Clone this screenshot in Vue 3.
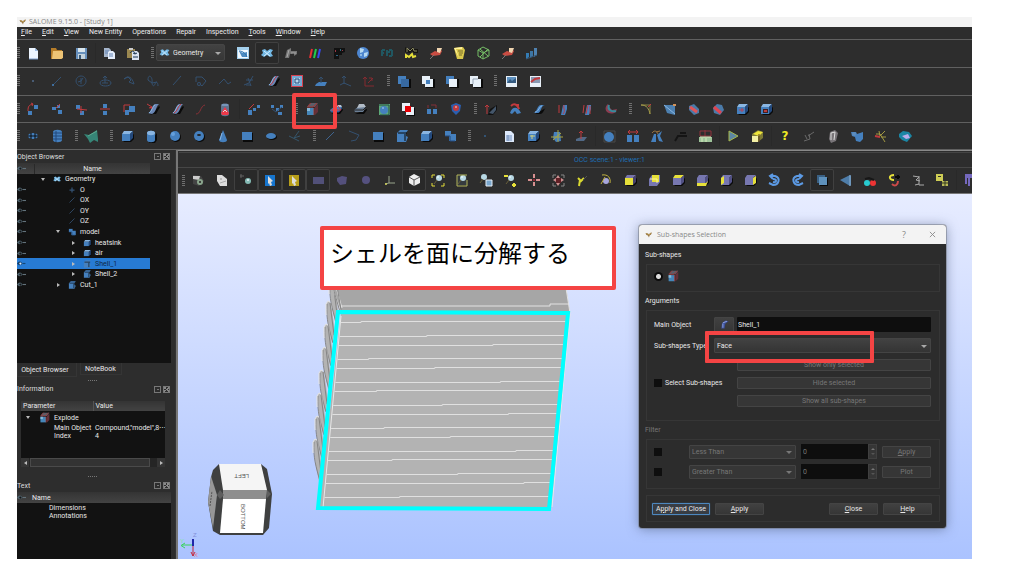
<script setup>
import { ref } from 'vue'

const b = '#4580be', d = '#23497c', l = '#8ab6e2', n = '#34506f', r = '#c23a3e', y = '#e6e03a', w = '#e8f0f8', v = '#7777b0', k = '#0a0a0a'
const P = (path, fill) => `<path d="${path}" fill="${fill}"/>`
const L = (path, stroke, width = 1) => `<path d="${path}" fill="none" stroke="${stroke}" stroke-width="${width}"/>`
const C = (x, cy, rad, fill) => `<circle cx="${x}" cy="${cy}" r="${rad}" fill="${fill}"/>`
const R = (x, ry, wd, h, fill) => `<rect x="${x}" y="${ry}" width="${wd}" height="${h}" fill="${fill}"/>`
const cube = (f = b, t = l, s = d) => P('M4 14h8l3-3V6z', k) + P('M3 6l2-3h9l-3 3z', t) + R(3, 6, 8, 7, f) + P('M11 6l3-3v7l-3 3z', s)
const sheet = P('M5 14l3-1h3l4-7-1-1z', k) + P('M3 12c3 0 4-8 7-9h4c-3 2-3 9-7 10z', '#6a86b4') + L('M4 12c3-1 3-7 6-8', l)
const slab = P('M3 13h9l3-4V8z', k) + P('M2 9l4-3h8l-3 5H3z', b) + P('M5 6l3-2h5l1 2z', '#b3c6da') + L('M3 11h8l3-4', d)
const glass = C(9, 6, 3, '#b8d8e4') + C(8, 5, 1, '#e5f6fb') + L('M7 8l-3 4', '#69603a')

const glyphs = {
  new: P('M4 3h6l3 3v8H4z', '#edf5ff') + P('M10 3v3h3z', '#9cbce4') + L('M4 14h9', '#7999c8'),
  open: P('M2 3h5l1 2h5v9H2z', '#b67d29') + P('M4 6h10v7l-2 1H3z', '#edc476'),
  save: R(3, 3, 11, 11, '#6790bd') + R(5, 3, 7, 4, '#d8e5ed') + R(5, 9, 7, 5, '#c3d2dc') + R(6, 10, 2, 4, '#375778'),
  copy: P('M3 3h5l2 2v7H3z', '#a5b5cc') + P('M7 6h5l2 2v6H7z', '#e5edfa') + L('M4 6h4M4 8h3M8 9h4M8 11h4', '#6585b5'),
  paste: R(2, 4, 8, 9, '#9b8850') + R(4, 3, 4, 2, '#ccc') + P('M7 6h5l2 2v7H7z', '#dce5f2') + L('M5 8c2-3 5-2 5 1l-2-1m2 1l2-1M8 12h5', '#19334e'),
  geometry: P('M3 5l3-1 2 2 3-2 3 1-2 3 2 3-3 1-3-2-3 2-3-2 2-2z', '#73b8e4') + L('M5 6l6 5m0-5l-6 5', '#d4eeff'),
  script: R(2, 2, 12, 12, '#a3cfec') + R(3, 5, 10, 8, '#f1f8ff') + P('M4 6l4 2 4-1v5H7z', '#4c8ac0') + L('M4 6c4 0 7 3 8 6', '#2b73b0'),
  mesh1: P('M2 13l2-8 4-2v3l6 0v3l-3 2V8L7 9l-1 4z', '#777') + L('M4 12l2-7M8 8h5', '#aaa'),
  bars: L('M3 13l2-9', '#e72e33', 2) + L('M7 13l2-9', '#23cd4b', 2) + L('M11 13l2-9', '#3548f5', 2),
  hex: P('M3 3h11v4l-3 1v2H8v4H3z', '#111') + R(4, 5, 1, 2, '#973744') + R(9, 4, 1, 2, '#316b7f') + R(5, 10, 2, 1, '#2e6684') + R(11, 5, 1, 1, '#973744'),
  globe: C(8, 8, 6, '#4d86d0') + P('M5 3l4 1-1 3-3 1zM9 8l4-1-1 4-3 1z', '#b5d9f1') + C(6, 10, 1, '#a5cded'),
  filter: L('M3 5v6m0-6h3M3 8h2M8 5v6m0-4h3m2-2v6m0-6h-3m0 6h3', '#205761', 2),
  yacs: P('M2 7V2l4 3 4-3 1 2h4v4h-4L9 6 7 8z', '#151510') + L('M4 7V3l3 3 3-3 1 3h3', '#8b8960') + L('M3 13v-3l3 2 3-3 1 3 3-1', y, 2),
  para: P('M3 9l5-3 3 1 1-4 3 3-2 4-7 1z', '#c94d43') + P('M10 3l5 0-2 5-3-1z', '#f0d5b0') + L('M3 14l4-4', '#777'),
  note: P('M3 3l9-1 2 3-2 9H6z', '#d9c84c') + P('M3 3l8-1v2H5l3 9z', '#fff19a') + L('M7 6h5M8 8h4M8 10h3', '#796d2d'),
  wire: L('M3 5l5-3 6 3v6l-6 3-5-3zm0 0l5 3 6-3M8 8v6M5 4l8 7M5 12l8-8', '#75bd66'),
  chart: P('M3 8l3 0v4l-3 2z', '#347cb4') + P('M7 6h3v5l-3 2z', '#3d76a5') + P('M11 3h3v7l-3 2z', '#4f82b0') + L('M3 14l11-4', '#365879'),
  point: C(8, 8, 1, '#536d8c'),
  line: L('M4 12l8-8', n) + C(4, 12, 1, b),
  circle: L('M8 3a5 5 0 1 0 .1 0M8 5v6M5 9l3-1 2-3', n),
  ellipse: L('M3 10c0 4 11 4 11 0s-11-4-11 0M8 10V3m-2 2l2-2 2 2M5 10h6', n),
  arc: L('M3 6l4-2 3 3-2 2 5 2M3 6c4-4 8-2 10 5', n),
  curve: L('M3 7c0-7 5-3 4 2 0 4 2 5 3 2s3-2 3 2M3 7l4 3 5-1', n),
  vector: L('M4 12l8-9', n),
  sketch: L('M3 9V4h6l4 4-4 5-3-3', n) + C(6, 11, 2, n) + C(6, 11, 1, '#2d2d2d'),
  poly: L('M2 11l5-5 4 5 3-2', n),
  iso: L('M3 12l5-2 4-7M5 7h7M5 12h5M7 5l3 8', n),
  rect: R(2, 2, 12, 12, '#d3404f') + R(3, 3, 10, 10, '#75aad4') + R(5, 5, 6, 6, '#b8d8eb') + L('M6 6h4v4H6z', d),
  plane: P('M3 11l3-2h8l-2 4H2z', b) + L('M8 10V4M6 6l2-2 2 2', n),
  axis: L('M7 3v8M3 12l4-2 7 3M5 5l2-2 2 2', n),
  axisred: L('M4 4v9h9M7 10l5-5M8 5h3v3M2 6l2-2 2 2', '#862a30'),
  sq1: R(2, 3, 8, 8, b) + R(6, 6, 9, 9, k) + R(5, 6, 8, 8, '#3769a1'),
  sq2: R(2, 3, 8, 8, w) + R(6, 6, 9, 9, k) + R(5, 6, 8, 8, w) + R(6, 7, 4, 4, b),
  sq3: R(2, 3, 8, 8, b) + R(6, 6, 9, 9, k) + R(5, 6, 8, 8, w),
  sq4: R(2, 3, 8, 8, w) + R(6, 6, 9, 9, k) + R(5, 6, 8, 8, w) + L('M5 11V6h5', '#95a4b5'),
  photo: R(3, 3, 11, 11, w) + R(4, 4, 9, 6, '#5e91c0') + P('M4 10l3-4 2 2 4-3v5z', '#345a80'),
  photored: R(3, 3, 11, 11, w) + R(4, 4, 9, 6, '#8899b2') + L('M4 9l4-3 5-1', r, 2),
  move: R(3, 10, 4, 4, b) + R(9, 4, 4, 4, b) + L('M3 10c0-5 1-6 5-7M6 2l2 1-1 2', r),
  scatter: R(3, 6, 4, 3, b) + R(8, 4, 3, 3, b) + R(9, 9, 4, 4, b) + L('M7 7l4-4', r),
  mirror: R(3, 4, 4, 4, b) + R(7, 10, 4, 4, b) + L('M4 8l10 1M8 5v7', r),
  scale: R(6, 3, 4, 4, b) + R(6, 10, 4, 4, b) + L('M3 8h10', r),
  offset: R(4, 9, 4, 5, b) + R(8, 5, 6, 6, b) + L('M3 11V4h6', r),
  proj: sheet + L('M2 3l5 3-1 2M7 6l-3 1', r),
  sweep: sheet + L('M5 12c4-2 3-6 7-9', r),
  redcurve: L('M3 13c5 0 4-8 9-9', '#8b3037'),
  can: P('M4 4c0-2 8-2 8 0v9c0 3-8 3-8 0z', '#63748f') + L('M5 4h6', l) + P('M4 12l4-6 4 6-1 2H5z', '#ee3949') + L('M6 11l2-2 2 2', '#ddd'),
  dotsup: R(3, 9, 4, 5, b) + R(8, 7, 3, 3, b) + R(12, 4, 3, 3, b) + L('M4 8l5-5', r),
  dots4: R(2, 4, 3, 3, b) + R(7, 7, 3, 3, b) + R(11, 4, 3, 3, b) + R(9, 11, 4, 3, b) + L('M3 8l4 3 6-5', n),
  explode: P('M3 6l3-4h8l-3 4z', '#5c5d68') + R(3, 7, 7, 7, '#4586b8') + R(3, 7, 3, 3, '#88b9d8') + P('M11 6l3-3v8l-3 3z', '#653039') + L('M3 6h6l4-4M10 7v7M4 5l3-3', '#a33433'),
  redslab: slab + L('M3 9h10l-4-5', r),
  slab: P('M3 13h9l3-4V8z', k) + P('M2 9l4-3h8l-3 5H3z', '#6b7f96') + P('M5 7l2-4h5l2 3z', '#b3bdc8') + L('M2 9h9l3-3', '#222'),
  sphereg: R(3, 3, 11, 11, '#5daa78') + L('M3 4h10v10H4', '#244d44') + C(8, 9, 4, b) + C(7, 7, 1, l),
  common: R(2, 2, 8, 8, w) + R(7, 7, 8, 8, k) + R(6, 6, 8, 8, w) + R(5, 5, 6, 6, '#e40006'),
  people: R(3, 8, 4, 5, b) + R(9, 8, 4, 5, b) + L('M4 7V4m8 3V4M7 4h5', '#863039'),
  shield: P('M3 4l5-2 5 2-1 6-4 4-4-4z', '#2b5faf') + C(8, 7, 3, r) + C(8, 6, 1, '#e5a2a2'),
  extrude: P('M7 8l7-4v5l-4 5H5z', '#111') + P('M6 12l7-7v4l-3 4z', '#44566a') + L('M4 13V4m-2 2l2-2 2 2', r),
  revolve: P('M3 12c2-7 8-7 11 0l-4 1-2-3-3 3z', b) + L('M4 5c4-4 7 0 8 3M9 4l3 0', r, 2),
  pipe: P('M4 13h5c4 0 4-6 6-6z', k) + P('M2 12c4 0 4-8 8-8h4c-4 0-4 8-7 8z', b) + L('M4 11c4 0 4-6 7-6', l),
  thin: P('M8 4h4v4l-2 6H6z', b) + L('M4 12V4m5 0c-1 5 2 5-1 9', r),
  pipes: P('M8 4h4v4l-2 6H6z', b) + L('M4 12l1-8m2 9l2-9m2 1v8', r),
  groove: P('M5 3c-6 5 0 13 8 8l1-3-5 1-2-2z', '#8d3d51') + L('M6 4c-2 5 3 7 7 6', '#358c9d', 2),
  fillet: L('M3 4h9v9', '#8c8540') + L('M3 4c6 0 8 4 9 9', '#a69d4a') + L('M10 6l3-3', r),
  chamfer: P('M2 4h11v10l-8-2z', '#4d80b0') + L('M2 4l11 9', l) + R(11, 3, 3, 2, '#d29259'),
  redcyl: P('M3 5l5-2 5 5v4l-5 2-5-5z', '#4b7aa8') + L('M4 6l7 5', '#df5559', 3),
  redcyl2: P('M3 7l4-4 5 1 2 5-4 5-6-2z', '#4b7aa8') + L('M4 6l7 6', '#df4450', 3),
  cubedot: cube() + L('M5 9h5M8 7v4', '#b74352'),
  cubehole: cube() + R(5, 8, 5, 4, '#402022') + R(6, 9, 3, 2, '#bb3e3e'),
  grid: P('M3 8c0-4 10-4 10 0s-10 4-10 0', b) + L('M3 8h10M6 5v6m4-6v6', k),
  barrel: P('M4 4c0-3 9-3 9 0v8c0 3-9 3-9 0z', b) + L('M4 5h9M4 8h9M4 11h9M7 3v11', d),
  patch: P('M0 6l5 1 8-5 1 9 0 3-4-2-4 3-2-4z', '#368577') + L('M4 8l9-5', '#5ca88e'),
  cube: cube(),
  cyl: P('M6 15h6l2-3V5z', k) + P('M4 5c0-3 8-3 8 0v7c0 3-8 3-8 0z', b) + P('M4 5c0-3 8-3 8 0s-8 3-8 0', l),
  sphere: C(9, 9, 5, k) + C(8, 8, 5, b) + C(6, 6, 2, '#65a0dc'),
  torus: C(9, 9, 5, k) + C(8, 8, 5, b) + `<ellipse cx="8" cy="7" rx="2" ry="1" fill="#222"/>`,
  cone: P('M8 2l4 10c0 3-8 3-8 0z', b) + L('M7 5l-2 7', l),
  face: R(4, 5, 10, 9, k) + R(3, 4, 10, 8, b),
  disk: `<ellipse cx="9" cy="9" rx="5" ry="3" fill="${k}"/><ellipse cx="8" cy="8" rx="5" ry="3" fill="${b}"/>`,
  tee: L('M2 8l10 5M7 10l5-7M7 10l6-2', '#35556b'),
  edge: L('M4 12l8-8', '#3f648e'),
  wirec: L('M3 3l10 4-3 5-5 1', n),
  shell: P('M3 5l3-3h8l-2 3v3l2 1-2 5H3z', b) + L('M4 5h9M11 6v7', k),
  comp: R(3, 3, 6, 5, b) + R(7, 6, 7, 7, b) + L('M3 8h5v5h5', d),
  dot: C(8, 8, 1, '#34618d'),
  doc: P('M4 3h6l3 3v8H4z', '#dce8fa') + L('M5 8h6M5 10h6M5 12h6M7 7v6', '#718dba'),
  cubey: cube() + L('M5 8h5M7 7v4', '#d1d17e'),
  spark: P('M5 4h6l1 9-5 1-3-4z', b) + L('M2 9h12M9 2v12M4 12l8-7', '#aaa642'),
  normal: P('M3 11l5-2h6l-3 4H3z', '#516986') + L('M8 11V3M6 5l2-2 2 2', r),
  bound: L('M3 3h11v11H3z', '#4b4b4b') + C(8, 9, 5, b),
  dist: R(2, 7, 5, 7, b) + R(9, 7, 5, 7, b) + L('M3 4h10M5 2L3 4l2 2M11 2l2 2-2 2', r),
  angle: P('M2 14l3-8h2v8M8 7l5-4-2 5 3 6-4-1z', b) + L('M3 5c3-4 5-1 6 1M7 4l4-1', '#9a7441'),
  beam: L('M2 13l3-5h9M7 5h6', '#151515', 2),
  tol: R(2, 9, 13, 5, '#9ec39a') + L('M3 3h11v5H3zM8 2v7', '#90333c') + L('M3 9h11M5 10v4m4-4v4', '#d6e7bc'),
  play: P('M4 3l9 5-9 5z', '#5d87a3') + L('M4 3l9 5-9 5z', '#a7b84c'),
  gold: P('M3 6l6-4 5 2v6l-5 4H3z', '#7f7b35') + R(3, 8, 6, 6, '#f4f0a5') + P('M4 6l5-3 5 1-4 4z', '#efe63a') + L('M10 6v8', '#5e4321'),
  fork: L('M3 13l6-2-1-5M7 8l6-4M4 7l2 4', '#696969'),
  clip: P('M5 4l5-2 3 3-2 8-5 2-2-4z', '#797579') + L('M6 12V5l4-1-1 8', '#ddd'),
  blob: P('M2 4h5l1 2 6-2v7l-3 3-4-1-1-4-3-1z', b) + C(5, 6, 2, '#5d8cbd'),
  scissors: L('M3 6l4 0 5 8M6 9l6-6M8 9l5 0M6 3l1 5', '#a39a43') + L('M2 8l5 1', r, 2),
  fish: P('M2 6l4-3 6 1 3 4-5 6-5-2-3-3z', '#1b86a4') + P('M5 8l6-2 2 4-4 1z', '#bbadea'),
  camera: P('M3 3l8 1 3 5-5 5-6-2z', '#444') + P('M3 4l7 0-1 4-6-1z', '#ccc') + C(10, 10, 3, '#8aa58c') + C(10, 10, 1, '#222'),
  page: P('M3 3h5l5 4 0 7-7 0-3-5z', '#ddd') + C(7, 7, 1, '#aaa') + L('M6 11l6-2', '#aaa'),
  orbit: C(10, 9, 3, '#84bab4') + C(10, 8, 1, w) + L('M2 4h4M3 2v4', '#636363'),
  selblue: R(3, 3, 10, 11, '#1675ce') + P('M6 4l5 5-2 1 1 3-2 1-1-3-1 1z', '#ddd'),
  selgold: R(3, 3, 10, 11, '#b79e1a') + P('M6 4l5 5-2 1 1 3-2 1-1-3-1 1z', '#ddd'),
  selrect: R(3, 5, 11, 7, '#515078'),
  selpoly: P('M3 6l5-2 5 1-1 7-6 1-3-4z', '#54507c'),
  selcirc: C(8, 8, 4, '#55517f'),
  triad: L('M7 4v7h6M7 11l-4 1', '#99a58c') + C(4, 12, 1, '#d4d45a'),
  whitecube: P('M3 5l5-3 6 3v6l-6 3-5-3z', '#eee') + L('M3 5l5 3 6-3M8 8v6', '#555'),
  fitall: glass + L('M2 6V3h3M11 3h3v3M2 11v3h3M11 14h3v-3', y),
  fitrect: R(3, 3, 10, 10, '#353b3e') + glass + L('M3 14V3h10M3 14h10V8', '#b3b65a'),
  zoomcube: C(6, 5, 3, '#b8d8e4') + L('M5 7l-3 4', '#69603a') + R(8, 8, 6, 6, '#79a6cc') + L('M8 8h6v6H8z', w),
  zoompan: glass + L('M2 4h4M10 13h4m-2-2v4', y, 2),
  cross: R(7, 2, 2, 4, '#d89090') + R(7, 10, 2, 4, '#d89090') + R(2, 7, 4, 2, '#d89090') + R(10, 7, 4, 2, '#d89090') + R(7, 7, 2, 2, '#923'),
  panbox: L('M3 6V3h3M11 3h3v3M3 11v3h3M11 14h3v-3', '#888') + R(6, 6, 5, 5, '#622026') + P('M8 3l2 3H6zM8 14l2-3H6zM3 8l3-2v4zM14 8l-3-2v4z', '#ce9191'),
  rot: L('M4 6l3 3 3-3M6 8l-1 6', '#d9d930', 2) + L('M9 8l4-4', '#555'),
  rotdot: C(8, 9, 3, '#a7a6dd') + L('M4 3c6-1 9 3 8 8M3 12l4-7', '#c3b43f'),
  front: cube(y, '#7774a9', '#464169'),
  back: P('M3 7l3-4h8v7l-3 4H3z', v) + R(6, 3, 7, 7, y) + L('M4 7h7v4', '#fff59b'),
  topv: cube(v, y, '#515083'),
  bottomv: cube(v, v, '#515083') + P('M3 11h9l2-2-2 5H3z', y),
  leftv: cube(v, v, '#515083') + P('M3 6l3-2v7l-3 2z', y),
  rightv: cube(v, v, '#515083') + P('M11 6l3-2v7l-3 2z', y),
  ccw: L('M4 4h5c6 2 4 9-2 9l-4-2M7 2L4 4l3 3M7 7c4 0 4 4 0 3', '#5c9ae4', 2),
  cw: L('M12 4H7c-6 2-4 9 2 9l4-2M9 2l3 2-3 3M9 7C5 7 5 11 9 10', '#5c9ae4', 2),
  ortho: R(6, 6, 8, 8, k) + R(3, 3, 8, 8, '#3a6083') + R(5, 5, 8, 8, '#5e91bc'),
  persp: P('M2 8l10-5 1 1v9l-1 1z', '#4e7da9') + L('M12 3v11', '#8db2d2'),
  stereo: C(5, 11, 3, '#28cbd0') + C(11, 11, 3, '#ed3434') + L('M3 7l4-1 5 2', '#171717', 2),
  reset: L('M8 3c-6 0-5 5 0 5', y, 2) + L('M6 12c3 3 6 1 6-3', '#ce4a48', 2) + L('M9 5h5M12 3v4', k, 2),
  hook: L('M3 4l6 1-3 3 4 1M9 4v9h5M5 13l4-1', '#aaa'),
  cells: L('M3 3h5v5H3zM3 6h5', '#cecd55', 2) + R(8, 9, 6, 5, '#b9b958') + L('M8 11h6m-3-2v5', '#353b20'),
  frame: L('M11 3H4v9M4 5h8M7 5v9', '#7468bd', 2),
  eye: P('M0 8c3-5 7-5 10 0-3 4-7 4-10 0', '#4f6470') + C(6, 8, 2, '#151515') + L('M10 8h6', '#62717a', 2),
  eyeon: P('M0 8c3-5 7-5 10 0-3 4-7 4-10 0', '#123c65') + C(6, 8, 2, '#d8eaff') + L('M10 8h5', '#164773', 2),
  plus: L('M8 4v8M4 8h8', '#345273', 2),
  arm: P('M5 6l4-3 4 1-4 3-1 6H4z', '#3c4f9a') + L('M6 6l5-2M6 7v5', '#9fb4e8'),
  logo: P('M1 4l5 1 2 2 2-3 4-1-2 4-3 2-1 4-2-4-3-1z', '#8d6932') + L('M3 5l5 3 4-4', '#d8b860')
}

const toolbars = [
  ['new', 'open', 'save', ';', 'copy', 'paste', '|', '@', 'script', '*geometry', 'mesh1', 'bars', 'hex', 'globe', 'filter', 'yacs', 'para', 'note', 'wire', 'para', 'chart'],
  ['point', 'line', 'circle', 'ellipse', 'arc', 'curve', 'vector', 'sketch', 'poly', 'iso', 'sweep', 'rect', 'plane', 'axis', 'axisred', '|', 'sq1', 'sq2', 'sq3', 'sq4', '|', 'photo', 'photored'],
  ['move', 'scatter', 'mirror', 'scale', 'offset', 'proj', 'sweep', 'redcurve', 'can', ';', 'dotsup', 'dots4', '|', 'explode', 'redslab', 'slab', 'sphereg', 'common', 'people', 'shield', '|', 'extrude', 'revolve', 'pipe', 'thin', 'pipes', 'groove', '|', 'fillet', 'chamfer', 'redcyl', 'redcyl2', 'cubedot', 'cubehole'],
  ['grid', 'barrel', '|', 'patch', '|', 'cube', 'cyl', 'sphere', 'torus', 'cone', 'face', 'disk', 'tee', '|', 'edge', 'wirec', 'face', 'shell', 'cube', 'comp', '|', 'dot', 'doc', 'cubey', 'spark', 'normal', ';', 'bound', 'dist', 'angle', 'beam', 'tol', ';', 'play', 'gold', ';', '?', 'fork', 'clip', 'blob', 'scissors', 'fish']
]
const viewTools = ['camera', 'page', '*orbit', '*selblue', '*selgold', '*selrect', 'selpoly', 'selcirc', 'triad', '*whitecube', 'fitall', 'fitrect', 'zoomcube', 'zoompan', 'cross', 'panbox', 'rot', 'rotdot', 'front', 'back', 'topv', 'bottomv', 'leftv', 'rightv', 'ccw', 'cw', '*ortho', 'persp', 'stereo', 'reset', 'hook', 'cells', ';', 'frame']
const menus = ['File', 'Edit', 'View', 'New Entity', 'Operations', 'Repair', 'Inspection', 'Tools', 'Window', 'Help']
const plain = ['New Entity', 'Operations', 'Repair', 'Inspection']
const tree = [
  { t: 'Geometry', i: 'geometry', depth: 0, open: true, noeye: true },
  { t: 'O', i: 'plus', depth: 1 }, { t: 'OX', i: 'edge', depth: 1 }, { t: 'OY', i: 'edge', depth: 1 }, { t: 'OZ', i: 'edge', depth: 1 },
  { t: 'model', i: 'comp', depth: 1, open: true },
  { t: 'heatsink', i: 'cube', depth: 2, closed: true }, { t: 'air', i: 'cube', depth: 2, closed: true },
  { t: 'Shell_1', i: 'shell', depth: 2, closed: true, on: true }, { t: 'Shell_2', i: 'shell', depth: 2, closed: true },
  { t: 'Cut_1', i: 'shell', depth: 1, closed: true }
]
const ribs = [322, 336, 345, 359, 368, 382, 391, 405, 414, 428, 437, 451, 460, 474, 483, 497]
const ribPath = ribs.map((t, i) => {
  const left = 342 - (t - 312) * 0.094
  const right = 567 - (t - 312) * 0.097
  const step = left + 20 + ((i * 67) % 190)
  return `M${left} ${t + 0.5}H${step}V${t - 0.5}H${right}`
}).join('')
const fins = [[329, 280], [326, 301], [324, 324], [322, 347], [319, 370], [317, 393], [315, 416], [313, 439]]
const target = ref('Shell_1')
const kind = ref('Face')
const module = ref('Geometry')
const name = (t) => t.replace('*', '')
</script>

<template>
  <main class="page">
    <div class="app">
      <header class="title"><svg class="logo" viewBox="0 0 16 16" v-html="glyphs.logo" />SALOME 9.15.0 - [Study 1]</header>
      <nav class="menu">
        <a v-for="m in menus" :key="m" href="#"><template v-if="plain.includes(m)">{{ m }}</template><template v-else><u>{{ m[0] }}</u>{{ m.slice(1) }}</template></a>
      </nav>
      <div v-for="(bar, bi) in toolbars" :key="bi" class="bar">
        <i class="grip first"></i>
        <template v-for="(t, ti) in bar" :key="ti">
          <i v-if="t === '|'" class="grip"></i>
          <i v-else-if="t === ';'" class="sep"></i>
          <label v-else-if="t === '@'" class="combo">
            <svg class="ico" viewBox="0 0 16 16" v-html="glyphs.geometry" />
            <select v-model="module" aria-label="Module"><option>Geometry</option></select>
            <i class="caret"></i>
          </label>
          <button v-else-if="t === '?'" class="tool help">?</button>
          <button v-else class="tool" :class="{ boxed: t[0] === '*', marked: t === 'explode' }" :aria-label="name(t)">
            <svg class="ico" viewBox="0 0 16 16" v-html="glyphs[name(t)]" />
          </button>
        </template>
      </div>

      <div class="work">
        <aside class="dock">
          <div class="dhead">Object Browser<span class="wbtns"><i></i><i class="x"></i></span></div>
          <div class="thead"><svg class="eye" viewBox="0 0 16 16" v-html="glyphs.eye" /><b>Name</b></div>
          <div class="treebox">
            <ul class="tree">
              <li v-for="item in tree" :key="item.t" :class="['lv' + item.depth, { on: item.on }]">
                <svg class="eye" viewBox="0 0 16 16" v-html="item.noeye ? '' : item.on ? glyphs.eyeon : glyphs.eye" />
                <span class="branch"><i :class="{ down: item.open, right: item.closed }"></i></span>
                <svg class="tico" viewBox="0 0 16 16" v-html="glyphs[item.i]" />
                <span>{{ item.t }}</span>
              </li>
            </ul>
          </div>
          <div class="tabs"><button class="tab act">Object Browser</button><button class="tab">NoteBook</button></div>
          <div class="dots"></div>
          <div class="dhead info">Information<span class="wbtns"><i></i><i class="x"></i></span></div>
          <div class="infobox">
            <table>
              <thead><tr><th>Parameter</th><th>Value</th></tr></thead>
              <tbody>
                <tr class="exp"><td colspan="2"><div><i class="down"></i><svg viewBox="0 0 16 16" v-html="glyphs.explode" />Explode</div></td></tr>
                <tr><td>Main Object</td><td>Compound,"model",8⋯</td></tr>
                <tr><td>Index</td><td>4</td></tr>
              </tbody>
            </table>
            <div class="scroll"><button aria-label="Left"><i class="l"></i></button><span></span><button aria-label="Right"><i class="right"></i></button></div>
          </div>
          <div class="dots low"></div>
          <div class="dhead">Text<span class="wbtns"><i></i><i class="x"></i></span></div>
          <div class="thead full"><svg class="eye" viewBox="0 0 16 16" v-html="glyphs.eye" /><b>Name</b></div>
          <ul class="texts"><li>Dimensions</li><li>Annotations</li></ul>
        </aside>
        <div class="split"></div>

        <section class="viewer">
          <div class="vtitle">OCC scene:1 - viewer:1</div>
          <div class="vbar">
            <i class="grip first"></i>
            <template v-for="(t, ti) in viewTools" :key="ti">
              <i v-if="t === ';'" class="sep"></i>
              <button v-else class="tool" :class="{ boxed: t[0] === '*' }" :aria-label="name(t)"><svg class="ico" viewBox="0 0 16 16" v-html="glyphs[name(t)]" /></button>
            </template>
          </div>
          <div class="scene">
            <svg class="model" viewBox="178 194 794 365" preserveAspectRatio="xMinYMin slice">
              <g v-for="f in fins" :key="f[1]" :transform="`translate(${f[0]} ${f[1]})`">
                <path d="M0 3L2 0L5 2L9 30L6 42L3 28z" fill="#b3b3b3" />
                <path d="M1 3C0 18 3 28 7 42M4 2L8 34" fill="none" stroke="#858585" />
                <path d="M0 14V3L2 0L4 1" fill="none" stroke="#e5e5e5" />
              </g>
              <path d="M330 280H565L570 313H341z" fill="#a6a6a6" />
              <path d="M330 280L341 312M334 280L342 308M341 306H550V304H569M566 288L570 313" fill="none" stroke="#e2e2e2" />
              <path d="M332 284L340 312M337 286L341 310" stroke="#888" />
              <path d="M341 312H570L551 508H319z" fill="#b3b3b3" />
              <path :d="ribPath" fill="none" stroke="#e0e0e0" />
              <path d="M341 316L323 508M570 314L552 507" fill="none" stroke="#e8e8e8" />
              <path d="M338 312L568 313L549 509L318 508z" fill="none" stroke="#00ffff" stroke-width="4" />
              <g class="cube">
                <path d="M219 464L213 470L211 477L208 502L213 531L220 535L263 535L269 528L272 494L267 469L261 464z" fill="#3f4040" />
                <path d="M211 476L208 502L213 528L217 495z" fill="#979797" />
                <path d="M219 464H261L267 490H223z" fill="#f5f5f5" />
                <path d="M223 490H267L266 499H223z" fill="#8e8e8e" />
                <path d="M223 499H266L263 533H220z" fill="#fff" />
                <path d="M217 495L220 490L224 495L220 499zM267 490L271 494L267 498z" fill="#5e5e5e" />
                <path d="M210 506L212 491" stroke="#555" stroke-dasharray="2 1" />
                <text transform="translate(249 474) rotate(180)">LEFT</text>
                <text transform="translate(241 504) rotate(90)">BOTTOM</text>
              </g>
              <path d="M193 545H182M185 543L181 545.5L185 548" fill="none" stroke="#3bd35d" />
              <path d="M193 546V539" stroke="#1f28a8" stroke-width="2" />
              <path d="M193 546V556M191 552L193 556L195 552" fill="none" stroke="#c3263b" />
              <text x="193" y="537" class="ax z">Z</text><text x="180" y="543" class="ax y">Y</text><text x="194" y="557" class="ax x">X</text>
            </svg>
            <div class="note">シェルを面に分解する</div>

            <section class="dialog" role="dialog" aria-label="Sub-shapes Selection">
              <div class="dtitle"><svg class="logo" viewBox="0 0 16 16" v-html="glyphs.logo" /><span>Sub-shapes Selection</span><button>?</button><button class="close" aria-label="Close window"><svg viewBox="0 0 8 8"><path d="M1 1L7 7M7 1L1 7" fill="none" stroke="#888" /></svg></button></div>
              <div class="dbody">
                <h4 class="h1st">Sub-shapes</h4>
                <div class="grp pick"><input type="radio" checked aria-label="Explode" /><svg viewBox="0 0 16 16" v-html="glyphs.explode" /></div>
                <h4>Arguments</h4>
                <div class="grp args">
                  <label for="obj">Main Object</label>
                  <button class="btn" aria-label="Select object"><svg viewBox="0 0 16 16" v-html="glyphs.arm" /></button>
                  <input id="obj" v-model="target" class="field" />
                  <label for="kind">Sub-shapes Type</label>
                  <div class="selwrap wide"><select id="kind" v-model="kind"><option>Face</option></select><i class="caret"></i></div>
                  <button class="btn c3" disabled>Show only selected</button>
                  <label class="chk"><input type="checkbox" />Select Sub-shapes</label>
                  <button class="btn c3" disabled>Hide selected</button>
                  <button class="btn c3" disabled>Show all sub-shapes</button>
                </div>
                <h4 class="off">Filter</h4>
                <div class="grp filt">
                  <template v-for="f in [['Less Than', 'Apply'], ['Greater Than', 'Plot']]" :key="f[0]">
                    <input type="checkbox" :aria-label="f[0]" />
                    <div class="selwrap off"><select disabled :aria-label="f[0] + ' mode'"><option>{{ f[0] }}</option></select><i class="caret"></i></div>
                    <div class="spin"><input value="0" disabled :aria-label="f[0] + ' value'" /><span><i class="up"></i><i class="down"></i></span></div>
                    <button class="btn" disabled><u v-if="f[1] === 'Apply'">A</u>{{ f[1] === 'Apply' ? 'pply' : f[1] }}</button>
                  </template>
                </div>
                <div class="grp acts">
                  <button class="btn main">A<u>p</u>ply and Close</button><button class="btn"><u>A</u>pply</button><span></span><button class="btn"><u>C</u>lose</button><button class="btn"><u>H</u>elp</button>
                </div>
              </div>
            </section>
          </div>
        </section>
      </div>
    </div>
  </main>
</template>

<style>
body { background: #fff; }
</style>

<style scoped>
*, *::after { box-sizing: border-box; }
.page { height: 100vh; padding: 17px 52px 17px 17px; font: 7px/10px Roboto, "Liberation Sans", sans-serif; color: #e8e8e8; }
.app { height: 100%; display: flex; flex-direction: column; background: #2d2d2d; overflow: hidden; }
button, input, select { font: inherit; color: inherit; margin: 0; padding: 0; border: 0; background: none; border-radius: 0; }
ul { list-style: none; margin: 0; padding: 0; }
.title { height: 10px; flex: none; background: #f3f3f3; color: #888; display: flex; align-items: center; gap: 2px; padding-left: 2px; font: 7px/8px "Open Sans", sans-serif; }
.logo { width: 8px; height: 8px; flex: none; }
.menu { height: 12px; flex: none; display: flex; align-items: center; gap: 10px; padding: 0 0 2px 4px; }
.menu a { color: #eee; text-decoration: none; }
.bar { height: 28px; flex: none; border-top: 1px solid #606060; display: flex; align-items: center; padding-bottom: 2px; }
.bar:nth-of-type(n+3) { height: 27px; padding-bottom: 1px; }
.grip { flex: none; width: 11px; height: 11px; background: repeating-linear-gradient(#707070 0 1px, #2d2d2d 1px 2px) 6px 0 / 3px 11px no-repeat; }
.grip.first { width: 4px; background-position: 0 0; }
.sep { flex: none; width: 4px; height: 20px; background: linear-gradient(#292929, #292929) 2px 0 / 1px 20px no-repeat; }
.tool { flex: none; width: 24px; height: 22px; display: flex; align-items: center; justify-content: center; position: relative; }
.ico { width: 16px; height: 16px; }
.boxed { box-shadow: inset 0 0 0 1px #404040; background: #292929; border-radius: 2px; }
.marked::after { content: ""; position: absolute; z-index: 4; left: -8px; top: -5px; width: 45px; height: 36px; border: 4px solid #f44444; border-radius: 2px; }
.help { font: bold 12px/20px "DejaVu Sans", sans-serif; color: #f0ea26; }
.combo { position: relative; width: 69px; height: 17px; margin-right: 6px; }
.combo .ico { position: absolute; left: 2px; top: 2px; width: 13px; height: 13px; }
.combo select { width: 100%; height: 100%; appearance: none; padding-left: 16px; background: linear-gradient(#424242, #363636); border: 1px solid #454545; border-radius: 2px; }
.caret { position: absolute; right: 4px; top: 50%; margin-top: -1px; border: 3px solid transparent; border-top-color: #aaa; border-bottom: 0; }
.work { flex: 1; min-height: 0; display: flex; border-top: 1px solid #606060; }
.dock { width: 158px; flex: none; display: flex; flex-direction: column; padding-right: 4px; overflow: hidden; }
.dhead { height: 13px; flex: none; display: flex; align-items: center; color: #ddd; }
.wbtns { margin-left: auto; display: flex; gap: 2px; padding-right: 1px; }
.wbtns i { width: 7px; height: 7px; border: 1px solid #777; }
.wbtns i:first-child { background: linear-gradient(#777, #777) 2px 2px / 2px 1px no-repeat; }
.wbtns .x { background: linear-gradient(45deg, transparent 40%, #888 40% 60%, transparent 60%), linear-gradient(-45deg, transparent 40%, #888 40% 60%, transparent 60%); }
.thead { height: 11px; flex: none; width: 133px; display: flex; align-items: center; background: linear-gradient(#343434, #434343); }
.thead b { font-weight: 400; flex: 1; text-align: center; border-left: 1px solid #292929; margin-left: 8px; }
.eye { width: 9px; height: 9px; flex: none; }
.treebox { height: 189px; flex: none; background: #121212; }
.tree { height: 116px; display: grid; grid-template-rows: repeat(11, 1fr); }
.tree li { display: flex; align-items: center; width: 133px; min-height: 0; line-height: 10px; }
.branch { display: flex; justify-content: flex-end; width: 19px; margin-right: 7px; }
.lv1 .branch { width: 34px; }
.lv2 .branch { width: 49px; }
.down { border: 2px solid transparent; border-top: 3px solid #bbb; border-bottom: 0; }
.right { border: 2px solid transparent; border-left: 3px solid #bbb; border-right: 0; }
.up { border: 2px solid transparent; border-bottom: 2px solid #777; border-top: 0; }
.l { border: 2px solid transparent; border-right: 3px solid #bbb; border-left: 0; }
.tico { width: 10px; height: 10px; margin-right: 3px; }
.on { background: #277bd4; color: #102946; }
.tabs { height: 13px; flex: none; display: flex; gap: 3px; }
.tab { height: 12px; padding: 0 6px 0 4px; border: 1px solid #353535; border-top: 0; width: 42px; white-space: nowrap; }
.act { width: 60px; height: 14px; padding-left: 2px; }
.dots { height: 7px; flex: none; background: repeating-linear-gradient(90deg, #777 0 1px, #2d2d2d 1px 2px) 71px 4px / 10px 1px no-repeat; }
.info { height: 12px; }
.infobox { width: 144px; margin: 6px 0 0 4px; height: 66px; flex: none; background: #121212; display: flex; flex-direction: column; }
table { border-collapse: collapse; table-layout: fixed; width: 100%; }
th, td { padding: 0; text-align: left; font-weight: 400; line-height: 8px; height: 8px; white-space: nowrap; overflow: hidden; }
th { height: 10px; background: linear-gradient(#343434, #434343); padding-left: 2px; }
th + th { border-left: 1px solid #555; }
td:first-child { padding-left: 33px; }
td + td { padding-left: 2px; }
.exp td:first-child { height: 13px; padding-left: 5px; }
.exp div { display: flex; align-items: center; gap: 8px; }
.exp svg { width: 13px; height: 13px; margin-right: -5px; }
.scroll { height: 9px; margin-top: auto; background: #252525; display: flex; gap: 1px; }
.scroll button { width: 8px; display: grid; place-items: center; background: #353535; }
.scroll span { flex: 1; border: 1px solid #4a4a4a; background: #333; margin-right: 6px; }
.low { margin-top: 5px; }
.full { width: 154px; }
.full b { text-align: left; padding-left: 6px; margin-left: 0; border: 0; }
.texts { flex: 1; background: #121212; padding: 1px 0 0 32px; line-height: 8px; }
.split { width: 3px; flex: none; background: #777; border-left: 1px solid #333; }
.viewer { flex: 1; min-width: 0; display: flex; flex-direction: column; border-top: 1px solid #888; }
.vtitle { height: 15px; flex: none; border-top: 1px solid #444; color: #1f6db4; text-align: center; line-height: 15px; margin: 1px 0 0 1px; padding-left: 68px; }
.vbar { height: 27px; flex: none; display: flex; align-items: center; border-top: 1px solid #464646; border-bottom: 1px solid #777; padding: 0 0 1px 4px; overflow: hidden; }
.scene { flex: 1; min-height: 0; position: relative; background: linear-gradient(#e7ecff, #abc3ff); }
.model { position: absolute; inset: 0; width: 100%; height: 100%; }
.cube text { font: 6px "Liberation Sans", sans-serif; fill: #555; }
.ax { font: 6px "Liberation Sans", sans-serif; }
.z { fill: #8290d8; } .y { fill: #7fe3a0; } .x { fill: #e07a93; }
.note { position: absolute; left: 142px; top: 32px; width: 296px; height: 64px; border: 4px solid #f44444; border-radius: 2px; background: #fff; color: #000; font: 24px/44px "Noto Sans CJK JP", sans-serif; padding-left: 6px; white-space: nowrap; }
.dialog { position: absolute; left: 461px; top: 31px; width: 307px; border-radius: 3px; background: #2c2c2c; box-shadow: 0 1px 12px #4a587899, 0 0 0 1px #7777; }
.dtitle { height: 19px; background: #f3f3f3; border-radius: 3px 3px 0 0; color: #888; display: flex; align-items: center; font: 7px/19px "Open Sans", sans-serif; padding-left: 6px; }
.dtitle span { flex: 1; margin-left: 4px; }
.dtitle button { width: 28px; font-size: 9px; line-height: 19px; }
.close svg { width: 7px; height: 7px; }
.dbody { padding: 0 6px 6px 7px; }
h4 { font: inherit; margin: 0 0 0 -1px; height: 18px; line-height: 18px; }
.h1st { height: 20px; line-height: 22px; }
.off { color: #777; }
.grp { border: 1px solid #363636; }
.pick { height: 28px; display: flex; align-items: center; gap: 3px; padding: 0 0 4px 7px; }
.pick svg { width: 14px; height: 14px; }
.pick input { appearance: none; width: 9px; height: 9px; border-radius: 50%; background: radial-gradient(circle, #ddd 0 2px, #0b0b0b 3px); }
.args { height: 111px; padding: 6px 8px 0 7px; display: grid; grid-template-columns: 60px 19px 1fr; grid-template-rows: 15px 15px 12px 12px 12px; column-gap: 2px; row-gap: 6px; align-items: center; }
.args > label { white-space: nowrap; }
.args > .btn { height: 100%; }
.args .c3 { grid-column: 3; }
.args label + .btn { margin-left: -2px; width: 20px; }
.args label + .c3 { margin-left: 0; width: auto; }
.args svg { width: 13px; height: 13px; }
.field { height: 100%; width: 100%; background: #0e0e0e; padding-left: 1px; border-radius: 1px; }
.btn { height: 12px; display: flex; align-items: center; justify-content: center; background: linear-gradient(#414141, #363636); border: 1px solid #444; border-radius: 1px; line-height: 8px; }
.btn:disabled { color: #777; background: #363636; }
.selwrap { position: relative; height: 14px; }
.selwrap select { width: 100%; height: 100%; appearance: none; padding-left: 2px; background: linear-gradient(#424242, #343434); border: 1px solid #444; border-radius: 1px; color: inherit; opacity: 1; }
.wide { grid-column: 2 / 4; margin-left: -2px; height: 15px; }
.wide::after { content: ""; position: absolute; left: -9px; top: -7px; width: 169px; height: 32px; border: 4px solid #f44444; border-radius: 1px; pointer-events: none; }
.selwrap.off select { background: #363636; }
.selwrap.off .caret { border-top-color: #777; }
.chk { grid-column: 1 / 3; display: flex; align-items: center; gap: 3px; }
input[type=checkbox] { appearance: none; width: 8px; height: 8px; background: #0e0e0e; flex: none; }
.filt { height: 50px; padding: 4px 8px 0 7px; display: grid; grid-template-columns: 30px 107px 76px 1fr; grid-template-rows: 15px 15px; column-gap: 5px; row-gap: 5px; align-items: center; margin-bottom: 6px; }
.spin { display: flex; height: 15px; }
.spin input { flex: 1; min-width: 0; background: #0e0e0e; color: #777; padding-left: 2px; }
.spin span { width: 9px; background: #363636; display: flex; flex-direction: column; align-items: center; justify-content: space-evenly; border: 1px solid #404040; }
.spin .down { border-top: 2px solid #555; }
.acts { height: 27px; padding: 0 7px 0 5px; display: grid; grid-template-columns: 58px 49px 1fr 49px 49px; gap: 5px; align-items: center; }
.main { border: 1px solid #4d87be; background: #383d44; box-shadow: 0 0 1px #4d87be; }
</style>
